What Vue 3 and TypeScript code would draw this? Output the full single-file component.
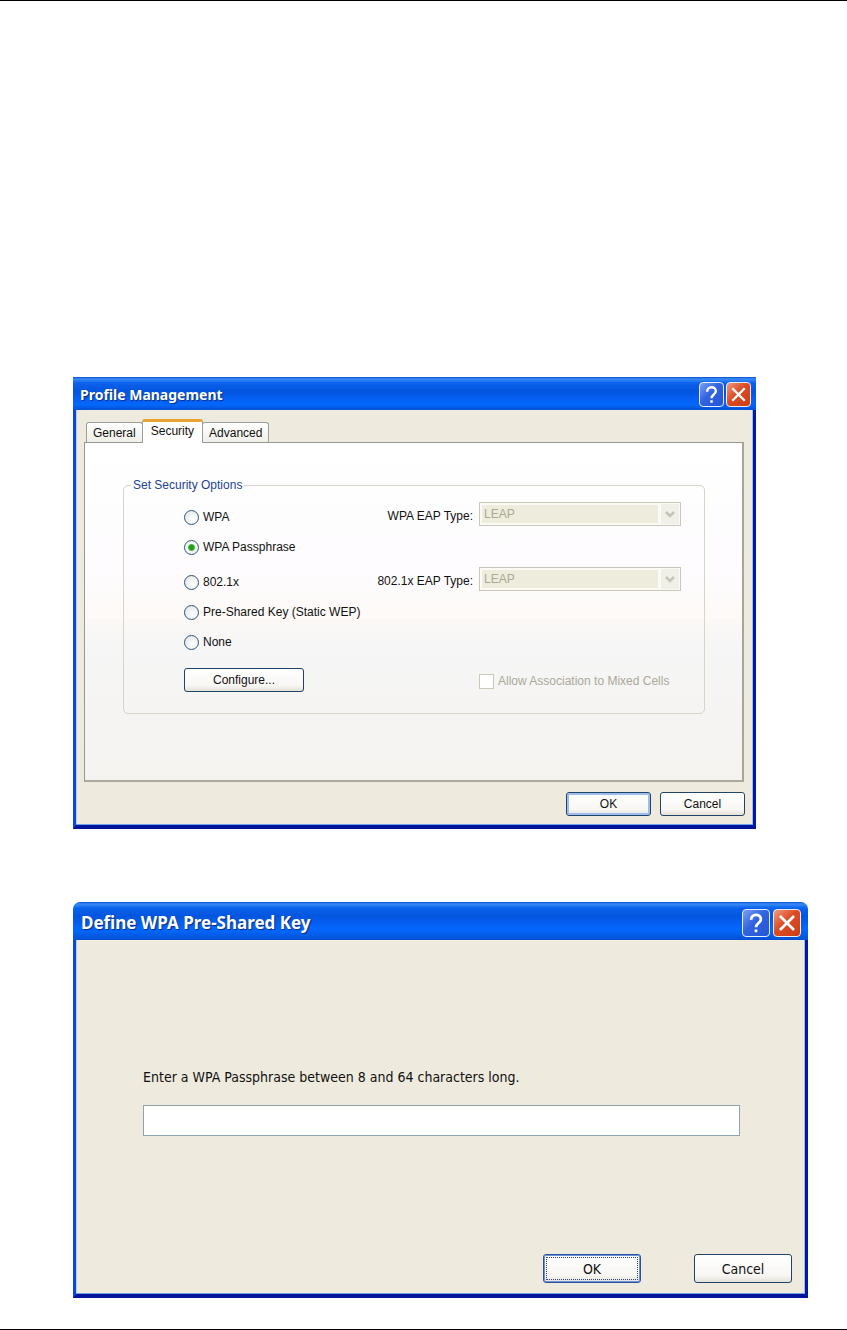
<script setup lang="ts">
import { ref } from 'vue'

interface Option {
  id: string
  label: string
  spaced?: boolean
}

const tabs: string[] = ['General', 'Security', 'Advanced']
const activeTab = ref('Security')

const options: Option[] = [
  { id: 'wpa', label: 'WPA' },
  { id: 'passphrase', label: 'WPA Passphrase' },
  { id: 'dot1x', label: '802.1x', spaced: true },
  { id: 'wep', label: 'Pre-Shared Key (Static WEP)' },
  { id: 'none', label: 'None' },
]
const selected = ref('passphrase')

const eapFields = [
  { id: 'wpa-eap', label: 'WPA EAP Type:' },
  { id: 'dot1x-eap', label: '802.1x EAP Type:' },
]

const passphrase = ref('')
</script>

<template>
  <main class="page">
    <section class="dialog profile" aria-labelledby="profile-title">
      <header class="titlebar">
        <h1 id="profile-title">Profile Management</h1>
        <button type="button" class="tool help" aria-label="Help">
          <svg viewBox="0 0 24 24"><path d="M7.500 9C7.500 3 16.500 3 16.500 8.500C16.500 12 12 12 12 16M12 18V20.500" /></svg>
        </button>
        <button type="button" class="tool close" aria-label="Close">
          <svg viewBox="0 0 24 24"><path d="M5.500 5.500L18.500 18.500M18.500 5.500L5.500 18.500" /></svg>
        </button>
      </header>
      <div class="body">
        <div class="tabs" role="tablist">
          <button
            v-for="tab in tabs"
            :key="tab"
            type="button"
            role="tab"
            class="tab"
            :class="{ active: tab === activeTab }"
            :aria-selected="tab === activeTab"
            @click="activeTab = tab"
          >{{ tab }}</button>
        </div>
        <div class="panel" role="tabpanel">
          <fieldset class="group">
            <legend>Set Security Options</legend>
            <div class="columns">
              <div class="choices">
                <label v-for="o in options" :key="o.id" class="choice" :class="{ spaced: o.spaced }">
                  <input v-model="selected" type="radio" name="security" :value="o.id" />
                  <span>{{ o.label }}</span>
                </label>
                <button type="button" class="btn configure">Configure...</button>
              </div>
              <div class="types">
                <div v-for="f in eapFields" :key="f.id" class="field">
                  <label :for="f.id">{{ f.label }}</label>
                  <div class="combo">
                    <select :id="f.id" disabled>
                      <option>LEAP</option>
                    </select>
                    <svg viewBox="0 0 18 20"><path d="M5 8L9 12L13 8" /></svg>
                  </div>
                </div>
                <label class="mixed">
                  <input type="checkbox" disabled />
                  <span>Allow Association to Mixed Cells</span>
                </label>
              </div>
            </div>
          </fieldset>
        </div>
        <footer class="actions">
          <button type="button" class="btn default">OK</button>
          <button type="button" class="btn">Cancel</button>
        </footer>
      </div>
    </section>

    <section class="dialog key" aria-labelledby="key-title">
      <header class="titlebar">
        <h1 id="key-title">Define WPA Pre-Shared Key</h1>
        <button type="button" class="tool help" aria-label="Help">
          <svg viewBox="0 0 24 24"><path d="M7.500 9C7.500 3 16.500 3 16.500 8.500C16.500 12 12 12 12 16M12 18V20.500" /></svg>
        </button>
        <button type="button" class="tool close" aria-label="Close">
          <svg viewBox="0 0 24 24"><path d="M5.500 5.500L18.500 18.500M18.500 5.500L5.500 18.500" /></svg>
        </button>
      </header>
      <div class="body">
        <div class="entry">
          <label for="passphrase">Enter a WPA Passphrase between 8 and 64 characters long.</label>
          <input id="passphrase" v-model="passphrase" type="text" />
        </div>
        <footer class="actions">
          <button type="button" class="btn default focused">OK</button>
          <button type="button" class="btn">Cancel</button>
        </footer>
      </div>
    </section>
  </main>
</template>

<style>
body {
  margin: 0;
  background: #fff;
}
</style>

<style scoped>
.page {
  box-sizing: border-box;
  padding: 376px 39px 31px 73px;
  border-top: 1px solid #000;
  border-bottom: 1px solid #000;
  font: 12px/16px "Liberation Sans", Arial, sans-serif;
  color: #111;
}
.page * {
  box-sizing: border-box;
}
button,
input,
select {
  margin: 0;
  font: inherit;
  color: inherit;
}

.titlebar {
  display: flex;
  align-items: center;
  gap: 2px;
  height: 33px;
  padding: 2px 5px 0 7px;
  background: linear-gradient(#0a4fd0 0, #3a8cf6 2px, #0b62ec 6px, #0355dd 14px, #0560f4 22px, #0368fc 28px, #0450d2 100%);
}
.titlebar h1 {
  flex: 1;
  margin: 0;
  font: bold 14px/20px "Noto Sans", "Open Sans", sans-serif;
  color: #fff;
  text-shadow: 1px 1px 1px #0a2a80;
}
.tool {
  width: 25px;
  height: 25px;
  padding: 0;
  border: 1px solid #e6edfb;
  border-radius: 4px;
}
.tool svg {
  display: block;
  width: 100%;
  height: 100%;
  fill: none;
  stroke: #fff;
  stroke-width: 2.5;
}
.help {
  background: linear-gradient(135deg, #7ba0f4, #3263e0 45%, #2355d6);
}
.close {
  background: linear-gradient(135deg, #f09a80, #dc4b24 45%, #cf3c12);
}
.body {
  background: #eeebde;
  border: solid #0a48dc;
  border-width: 0 3px 4px;
  border-right-color: #0019a6;
  border-bottom-color: #00159a;
  box-shadow: inset 0 -1px #6fa0ea, inset 1px 0 #b9cdf0, inset -1px 0 #9dbbec;
}

.profile {
  margin-right: 52px;
}
.profile .body {
  padding: 9px 9px 9px 8px;
}
.tabs {
  display: flex;
  align-items: flex-end;
  padding-left: 2px;
}
.tab {
  height: 20px;
  padding: 0 6px;
  border: 1px solid #9a9f9c;
  border-bottom: 0;
  border-radius: 3px 3px 0 0;
  background: linear-gradient(#fff, #f0efe8);
  white-space: nowrap;
}
.tab.active {
  position: relative;
  z-index: 1;
  height: 24px;
  margin: 0 -1px -1px;
  padding: 0 8px 3px;
  border-top: 3px solid #eba32f;
  background: #fff;
}
.panel {
  padding: 34px 37px 66px 38px;
  border: 1px solid #939a94;
  border-width: 1px 2px 2px 1px;
  border-right-color: #a3a89c;
  border-bottom-color: #aaa9a0;
  background: linear-gradient(#fff 0%, #fefcfe 38%, #fcf9f6 52%, #f6f6f6 60%, #f5f3f0 100%);
}
.group {
  min-width: 0;
  margin: 0;
  padding: 9px 23px 21px 60px;
  border: 1px solid #d5d5c8;
  border-radius: 5px;
}
.group legend {
  margin-left: -53px;
  padding: 0 2px;
  color: #1c4492;
}
.columns {
  display: flex;
  justify-content: space-between;
}
.choices,
.types {
  display: flex;
  flex-direction: column;
}
.choices {
  gap: 10px;
  padding-top: 5px;
}
.choice {
  display: flex;
  align-items: center;
  gap: 4px;
  height: 20px;
}
.choice.spaced {
  margin-top: 5px;
}
.choice input {
  appearance: none;
  width: 15px;
  height: 15px;
  border: 1px solid #2f5577;
  border-radius: 50%;
  background: radial-gradient(circle at 65% 65%, #fff, #dfe2e4);
}
.choice input:checked {
  background: radial-gradient(circle, #249a20 0 2px, #49bd42 3px, #f5f7f3 4px);
}
.types {
  align-items: flex-end;
}
.field {
  display: flex;
  align-items: center;
  gap: 6px;
  margin-bottom: 41px;
}
.field label {
  padding-top: 4px;
}
.combo {
  position: relative;
  width: 202px;
  height: 24px;
  padding: 2px 22px 2px 2px;
  border: 1px solid #c9c7ba;
  background: #fbfaf4;
}
.combo select {
  appearance: none;
  display: block;
  width: 100%;
  height: 100%;
  padding: 0 2px;
  border: 0;
  border-radius: 0;
  background: #eeecdc;
  color: #aaa894;
  opacity: 1;
}
.combo svg {
  position: absolute;
  top: 1px;
  right: 1px;
  width: 18px;
  height: 20px;
  fill: none;
  stroke: #c6c4ba;
  stroke-width: 2.5;
  background: #f0efe8;
}
.mixed {
  display: flex;
  align-items: center;
  gap: 4px;
  width: 202px;
  margin-top: 41px;
  color: #aaa898;
  white-space: nowrap;
}
.mixed input {
  appearance: none;
  flex: none;
  width: 15px;
  height: 15px;
  border: 1px solid #cbc9b8;
  background: #fff;
}
.btn {
  width: 85px;
  height: 24px;
  padding: 0;
  border: 1px solid #1f4468;
  border-radius: 3px;
  background: linear-gradient(#fff, #f8f7f4 75%, #e4e1d8);
}
.btn.default {
  box-shadow: inset 0 0 0 2px #9dbcf0;
}
.btn.configure {
  width: 120px;
  margin-top: 6px;
}
.profile .actions {
  margin-right: -1px;
}
.actions {
  display: flex;
  justify-content: flex-end;
  gap: 9px;
  padding-top: 10px;
}

.key {
  margin-top: 73px;
}
.key .titlebar {
  height: 38px;
  padding: 3px 7px 0 8px;
  gap: 3px;
  border-radius: 7px 7px 0 0;
}
.key h1 {
  font-size: 17px;
  line-height: 24px;
}
.key .tool {
  width: 28px;
  height: 28px;
}
.key .body {
  padding: 128px 13px 11px 67px;
  font: 14px/18px "DejaVu Sans Condensed", "DejaVu Sans", Tahoma, sans-serif;
}
.entry {
  display: flex;
  flex-direction: column;
  gap: 19px;
  padding-right: 52px;
}
.entry input {
  width: 100%;
  height: 31px;
  padding: 4px;
  border: 1px solid #8da4b2;
  background: #fff;
}
.key .actions {
  gap: 53px;
  padding-top: 118px;
}
.key .btn {
  width: 98px;
  height: 29px;
}
.key .btn.focused {
  border-color: #2a50a0;
  box-shadow: inset 0 0 0 1px #6f94dc;
  outline: 1px dotted #3a4270;
  outline-offset: -4px;
}
</style>
